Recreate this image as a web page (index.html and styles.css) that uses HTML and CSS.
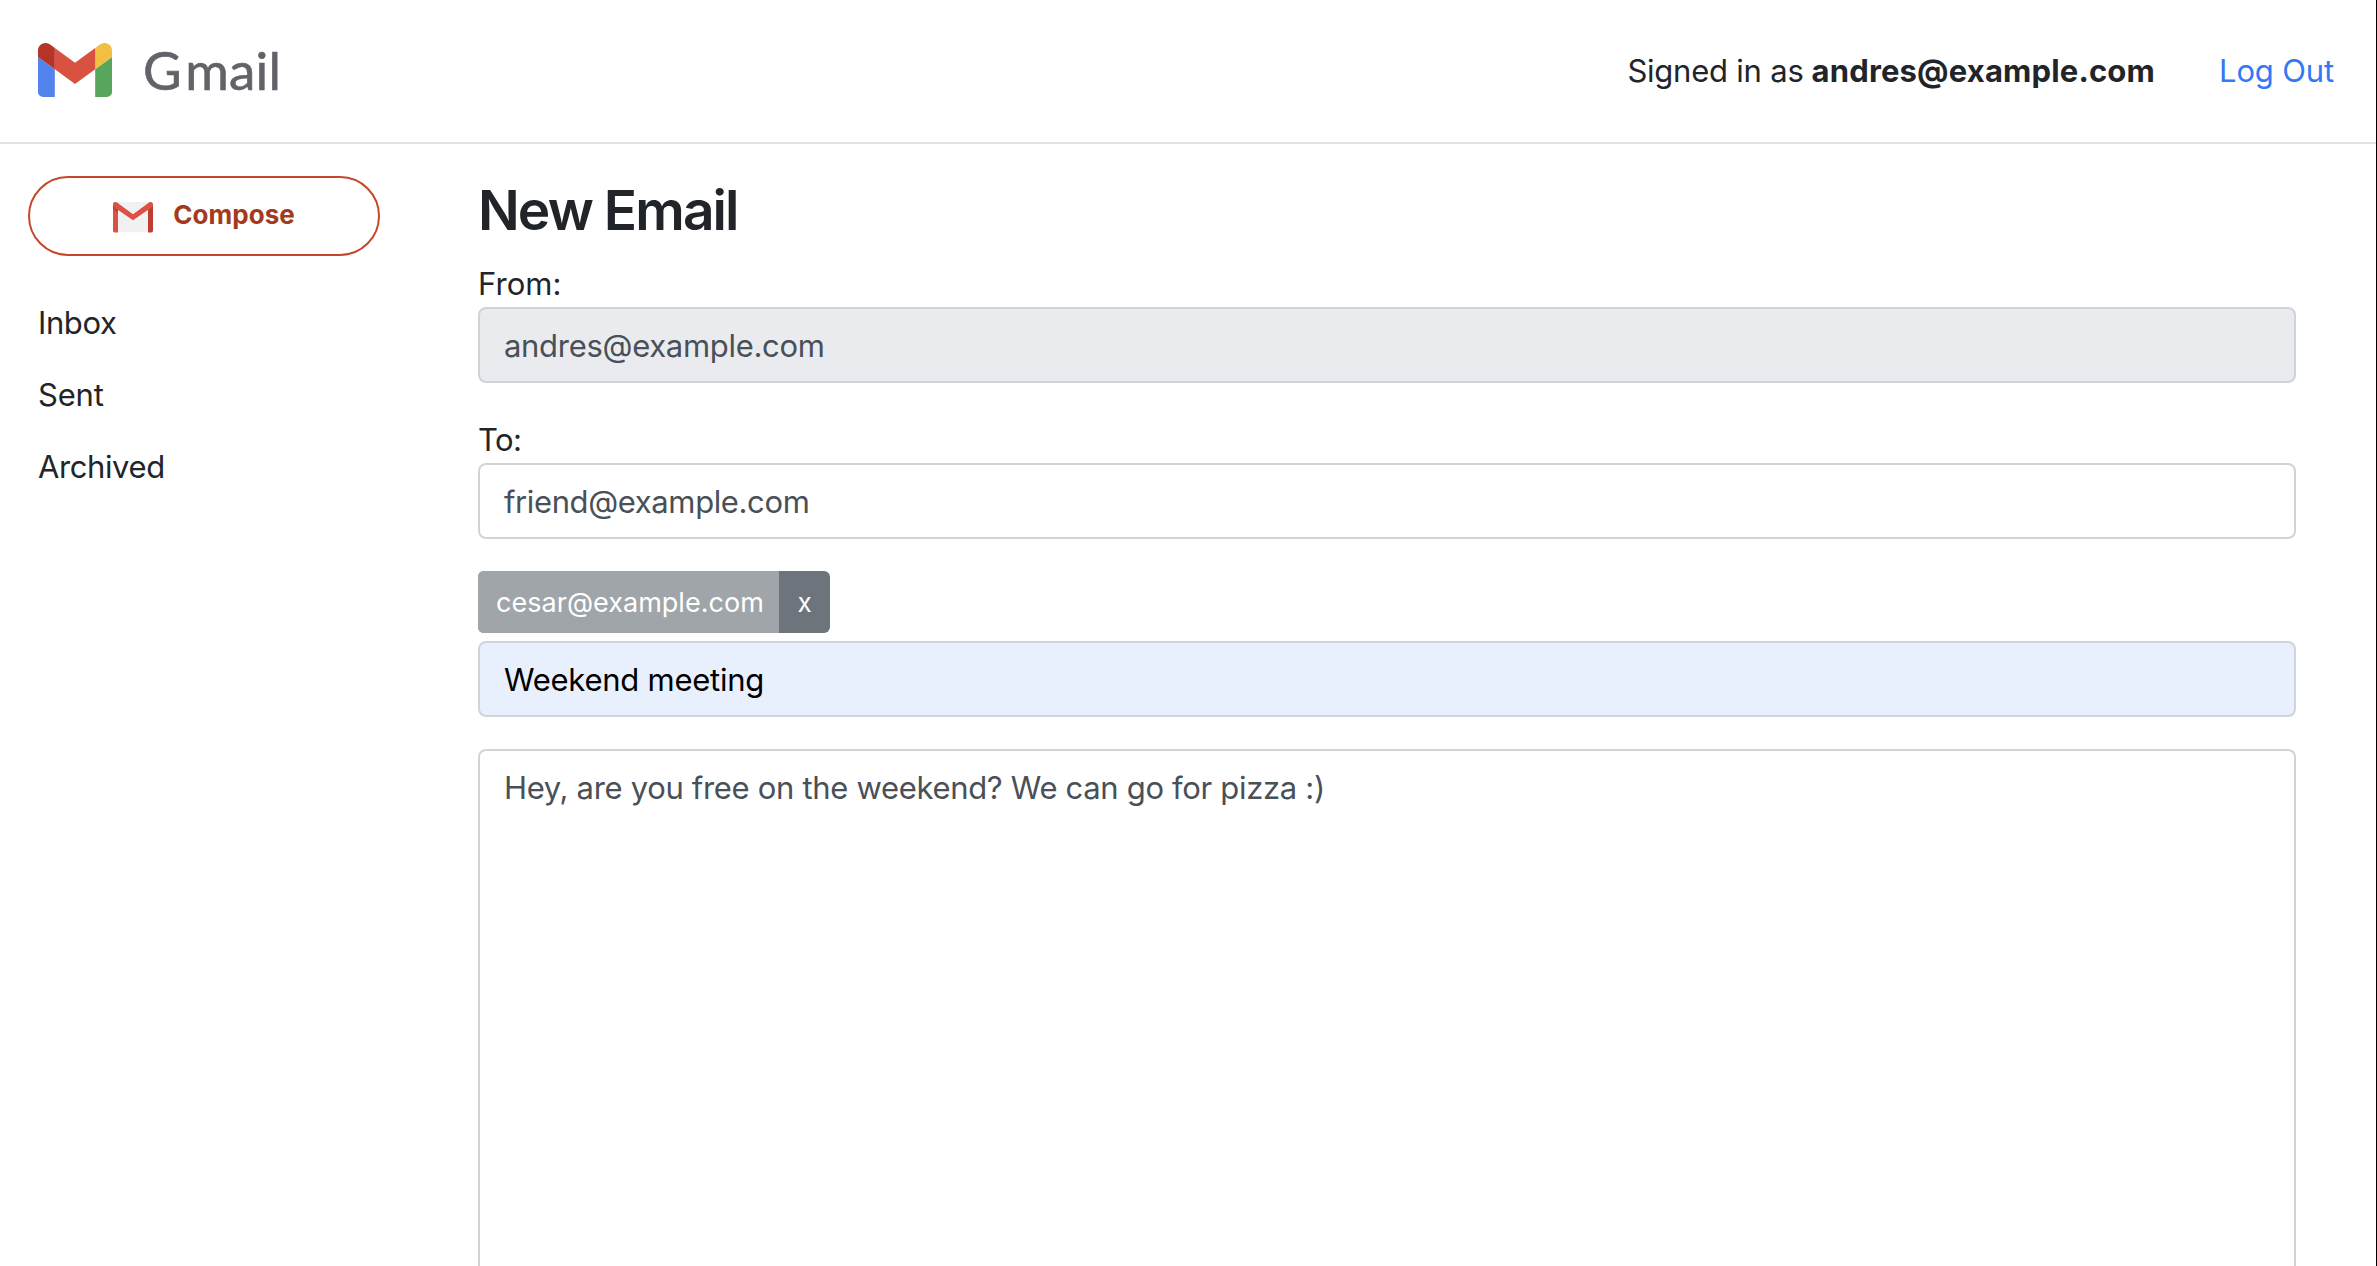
FILE: index.html
```
<!DOCTYPE html>
<html lang="en">
<head>
  <meta charset="utf-8">
  <title>Gmail</title>
  <link rel="stylesheet" href="styles.css">
</head>
<body>
  <header class="topbar">
    <a class="brand">
      <svg class="brand-mark" viewBox="52 42 88 66" preserveAspectRatio="none" aria-hidden="true">
        <path fill="#5383ec" d="M58 108h14V74L52 59v43c0 3.32 2.69 6 6 6"/>
        <path fill="#58a55c" d="M120 108h14c3.32 0 6-2.69 6-6V59l-20 15"/>
        <path fill="#f1bf42" d="M120 48v26l20-15v-8c0-7.42-8.47-11.65-14.4-7.2"/>
        <path fill="#d95140" d="M72 74V48l24 18 24-18v26L96 92"/>
        <path fill="#b53428" d="M52 51v8l20 15V48l-5.6-4.2c-5.94-4.45-14.4-.22-14.4 7.2"/>
      </svg>
      <span class="brand-name"><span class="brand-initial">G</span>mail</span>
    </a>
    <div class="account">
      <span class="signed-in">Signed in as</span>
      <strong class="user">andres@example.com</strong>
      <a class="logout">Log Out</a>
    </div>
  </header>

  <div class="layout">
    <aside class="sidebar">
      <button class="compose" type="button">
        <svg class="compose-icon" viewBox="0 0 40 31" aria-hidden="true">
          <path fill="#f1f1f1" d="M2 0h36v30.300H2z"/>
          <path fill="#dd5144" d="M0 2.500 5 6v24.600H1.800A1.800 1.800 0 0 1 0 28.800z"/>
          <path fill="#c03d32" d="M40 2.500 35 6v24.600h3.200a1.800 1.800 0 0 0 1.800-1.800z"/>
          <path fill="#c03d32" d="M0 2.500v4.600l5 3.600V4z"/>
          <path fill="#dd5144" d="M0 2.500C0 .2 2.300-.7 4 .5l16 11.800L36 .5c1.700-1.200 4-.3 4 2 0 1.400-.5 2.200-1.500 2.900L20 18.300 1.500 5.400C.5 4.700 0 3.900 0 2.500z"/>
        </svg>
        <span class="compose-label">Compose</span>
      </button>
      <nav class="folders">
        <a class="folder">Inbox</a>
        <a class="folder folder-sent">Sent</a>
        <a class="folder">Archived</a>
      </nav>
    </aside>

    <main class="content">
      <h1 class="title">New Email</h1>
      <form class="email-form">
        <div class="field">
          <label class="label-from" for="from">From:</label>
          <input class="control control-disabled" id="from" value="andres@example.com" readonly>
        </div>
        <div class="field">
          <label class="label-to" for="to">To:</label>
          <input class="control control-to" id="to" value="friend@example.com">
        </div>
        <div class="recipients">
          <span class="recipient">cesar@example.com</span>
          <button class="recipient-remove" type="button">x</button>
        </div>
        <input class="control control-autofill" value="Weekend meeting" aria-label="Subject">
        <textarea class="control control-body" aria-label="Body">Hey, are you free on the weekend? We can go for pizza :)</textarea>
      </form>
    </main>
  </div>
</body>
</html>
```
FILE: styles.css
```
* {
  box-sizing: border-box;
}

body {
  margin: 0;
  height: 100vh;
  overflow: hidden;
  border-right: 1px solid #000;
  background: #fff;
  color: #212529;
  font: 400 31px/48px Inter, "Liberation Sans", sans-serif;
  letter-spacing: -0.3px;
}

.topbar {
  display: flex;
  align-items: center;
  justify-content: space-between;
  height: 144px;
  padding: 0 42px 0 38px;
  border-bottom: 2px solid #e3e3e3;
}

.brand {
  display: flex;
  align-items: center;
  gap: 31px;
}

.brand-mark {
  width: 74px;
  height: 54px;
  margin-top: -2px;
}

.brand-name {
  padding-bottom: 2px;
  color: #626369;
  font: 400 53px/60px Lato, sans-serif;
  letter-spacing: 0.2px;
  -webkit-text-stroke: 0.6px #626369;
}

.brand-initial {
  letter-spacing: 3.5px;
}

.account {
  display: flex;
  align-items: center;
}

.signed-in {
  margin-right: 8px;
  letter-spacing: -0.22px;
}

.user {
  margin-right: 64px;
  font-weight: 700;
  letter-spacing: 0.17px;
}

.logout {
  color: #3478f6;
  letter-spacing: -0.15px;
}

.layout {
  display: flex;
}

.sidebar {
  flex: none;
  width: 478px;
  padding: 32px 98px 0 28px;
}

.compose {
  display: flex;
  align-items: center;
  justify-content: center;
  gap: 20px;
  width: 352px;
  height: 80px;
  padding: 0;
  border: 2px solid #c5472a;
  border-radius: 40px;
  background: #fff;
}

.compose-icon {
  width: 40px;
  height: 31px;
  margin-top: 3px;
}

.compose-label {
  padding-bottom: 2px;
  color: #a33a1e;
  font: 700 26px/40px Inter, sans-serif;
  letter-spacing: 0.03px;
}

.folders {
  display: flex;
  flex-direction: column;
  padding: 31px 0 0 10px;
}

.folder {
  line-height: 72px;
  letter-spacing: -0.4px;
}

.folder-sent {
  letter-spacing: -0.19px;
}

.content {
  flex: 1;
  padding: 34px 80px 0 0;
}

.title {
  margin: 0 0 18px;
  font: 600 55px/64px Inter, sans-serif;
  letter-spacing: -1.9px;
}

.email-form {
  display: flex;
  flex-direction: column;
}

.field {
  display: flex;
  flex-direction: column;
  margin-bottom: 33px;
}

.field label {
  height: 47px;
}

.label-from {
  letter-spacing: 0.05px;
}

.label-to {
  letter-spacing: -0.59px;
}

.control {
  display: block;
  width: 100%;
  height: 76px;
  margin: 0;
  padding: 12px 24px;
  border: 2px solid #ced4da;
  border-radius: 8px;
  outline: none;
  background: #fff;
  color: #495057;
  font: 400 31px/48px Inter, sans-serif;
  letter-spacing: -0.3px;
}

.control-disabled {
  background: #e9ebef;
}

.control-to {
  letter-spacing: -0.38px;
}

.control-autofill {
  background: #e8effd;
  color: #000;
  letter-spacing: -0.25px;
}

.control-body {
  height: calc(100vh - 749px);
  margin-top: 32px;
  padding-top: 13px;
  border-bottom: 0;
  border-radius: 8px 8px 0 0;
  letter-spacing: -0.32px;
  resize: none;
}

.recipients {
  display: flex;
  align-self: flex-start;
  height: 62px;
  margin: -1px 0 8px;
  overflow: hidden;
  border-radius: 6px;
  background: #6d747c;
  color: #fff;
  font-size: 27px;
  line-height: 64px;
}

.recipient {
  width: 301px;
  padding-left: 18px;
  background: #a0a5a9;
  letter-spacing: 0.03px;
}

.recipient-remove {
  width: 51px;
  padding: 0;
  border: 0;
  background: none;
  color: inherit;
  font: 400 26px/64px Inter, sans-serif;
}
```
